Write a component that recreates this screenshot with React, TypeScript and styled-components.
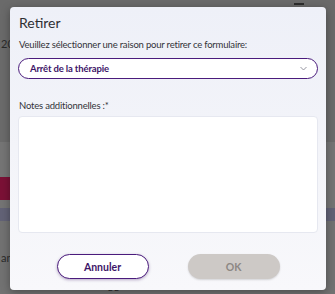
import React from "react";
import styled, { createGlobalStyle } from "styled-components";

const Global = createGlobalStyle`
  html, body { margin: 0; padding: 0; }
  body { background: #6c6c6c; font-family: Lato, "Open Sans", sans-serif; }
  * { box-sizing: border-box; }
`;

const Page = styled.div`
  position: relative;
  width: 335px;
  height: 294px;
  overflow: hidden;
  display: flex;
  flex-direction: column;
  background: #6c6c6c;
`;

const Band = styled.div<{ $h: number; $bg: string }>`
  height: ${(p) => p.$h}px;
  background: ${(p) => p.$bg};
  flex-shrink: 0;
  display: flex;
  align-items: center;
  color: #2a2a2a;
  font-size: 11px;
  padding-left: 1px;
`;

const BgButton = styled.div`
  width: 60px;
  height: 23px;
  background: #7b1136;
  color: #c9a0ad;
  font-size: 11px;
  display: flex;
  align-items: center;
  justify-content: flex-end;
  padding-right: 2px;
  margin-left: -28px;
`;

const Dialog = styled.div`
  position: absolute;
  left: 10px;
  top: 7px;
  width: 316px;
  height: 283px;
  border-radius: 4px;
  background: linear-gradient(180deg, #eef0f8 0%, #f3f4f9 50%, #f8f8fb 100%);
  box-shadow: 0 2px 8px rgba(0, 0, 0, 0.35);
  display: flex;
  flex-direction: column;
  padding: 0 8px;
`;

const Title = styled.h2`
  margin: 7px 0 0 1px;
  font-size: 14px;
  line-height: 18px;
  font-weight: 400;
  color: #2f2f33;
`;

const Label = styled.div`
  margin: 6px 0 0 1px;
  font-size: 9.5px;
  line-height: 13px;
  letter-spacing: -0.2px;
  color: #333338;
`;

const Select = styled.div`
  margin-top: 7px;
  height: 21px;
  border: 1.6px solid #4a1b7c;
  border-radius: 11px;
  background: #ffffff;
  display: flex;
  align-items: center;
  justify-content: space-between;
  padding: 0 10px 0 11px;
  font-size: 9.5px;
  font-weight: 700;
  letter-spacing: -0.15px;
  color: #3d1568;
`;

const Chevron = styled.svg`
  width: 7px;
  height: 5px;
`;

const NotesLabel = styled.div`
  margin: 20px 0 0 1px;
  font-size: 9.5px;
  line-height: 13px;
  letter-spacing: -0.2px;
  color: #333338;
`;

const TextArea = styled.div`
  margin-top: 4px;
  height: 117px;
  background: #ffffff;
  border-radius: 4px;
  border: 1px solid #e6e8f0;
`;

const Actions = styled.div`
  margin-top: 21px;
  display: flex;
  justify-content: center;
  gap: 39px;
`;

const Button = styled.div<{ $primary?: boolean }>`
  width: 92px;
  height: 25px;
  border-radius: 13px;
  display: flex;
  align-items: center;
  justify-content: center;
  font-size: 10.5px;
  font-weight: 700;
  ${(p) =>
    p.$primary
      ? `background: #cdc9c6; color: #8c8783; box-shadow: 0 1px 2px rgba(0,0,0,0.15);`
      : `background: #ffffff; color: #3d1568; border: 1.6px solid #4a1b7c; box-shadow: 0 1px 3px rgba(60,20,100,0.35);`}
`;

const TopDash = styled.div`
  position: absolute;
  left: 294px;
  top: 3px;
  width: 10px;
  height: 2px;
  background: #2c2c2c;
`;

const BottomText = styled.div`
  position: absolute;
  left: 108px;
  top: 284px;
  font-size: 8px;
  line-height: 9px;
  color: #2a2a2a;
`;

export default function App() {
  return (
    <>
      <Global />
      <Page>
        <Band $h={36} $bg="#6a6a6a" />
        <Band $h={14} $bg="#6a6a6a">20</Band>
        <Band $h={92} $bg="#6b6b6b" />
        <Band $h={34} $bg="#757575" />
        <Band $h={24} $bg="#757575">
          <BgButton>orn</BgButton>
        </Band>
        <Band $h={8} $bg="#747474" />
        <Band $h={13} $bg="#626276" />
        <Band $h={73} $bg="#727272">an</Band>
        <TopDash />
        <BottomText>2'2</BottomText>
        <Dialog>
          <Title>Retirer</Title>
          <Label>Veuillez sélectionner une raison pour retirer ce formulaire:</Label>
          <Select>
            <span>Arrêt de la thérapie</span>
            <Chevron viewBox="0 0 7 5">
              <path d="M0.5 1 L3.5 4 L6.5 1" fill="none" stroke="#8a8a96" strokeWidth="0.9" />
            </Chevron>
          </Select>
          <NotesLabel>Notes additionnelles :*</NotesLabel>
          <TextArea />
          <Actions>
            <Button>Annuler</Button>
            <Button $primary>OK</Button>
          </Actions>
        </Dialog>
      </Page>
    </>
  );
}
